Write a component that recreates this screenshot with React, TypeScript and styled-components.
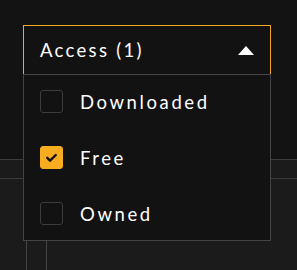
import { FC, useState } from "react";
import styled, { createGlobalStyle } from "styled-components";

const GlobalStyle = createGlobalStyle`
  html, body {
    margin: 0;
    padding: 0;
    background: #131313;
  }
  body {
    font-family: "Lato", "DejaVu Sans", sans-serif;
  }
`;

type Option = {
  id: string;
  label: string;
};

const options: Option[] = [
  { id: "downloaded", label: "Downloaded" },
  { id: "free", label: "Free" },
  { id: "owned", label: "Owned" },
];

const App: FC = () => {
  const [selected, setSelected] = useState<string[]>(["free"]);

  const toggle = (id: string) => {
    setSelected((prev) =>
      prev.includes(id) ? prev.filter((x) => x !== id) : [...prev, id]
    );
  };

  return (
    <Page>
      <GlobalStyle />
      {/* TABLE BEHIND */}
      <Table>
        <TopArea />
        <HeaderRow />
        <BodyRow>
          <Cell $width={26} />
          <Cell $width={19} />
          <Cell $width={0} $grow />
        </BodyRow>
      </Table>

      {/* DROPDOWN */}
      <Dropdown>
        <Trigger>
          <TriggerLabel>Access ({selected.length})</TriggerLabel>
          <Caret viewBox="0 0 16 9" width="16" height="9">
            <polygon points="8,0 16,9 0,9" fill="#ffffff" />
          </Caret>
        </Trigger>
        <Menu>
          {options.map((opt) => {
            const checked = selected.includes(opt.id);
            return (
              <Item key={opt.id} onClick={() => toggle(opt.id)}>
                <Box $checked={checked}>
                  {checked && (
                    <svg viewBox="0 0 24 24" width="17" height="17">
                      <path
                        d="M6 12.5l4 4L18 8.5"
                        fill="none"
                        stroke="#111"
                        strokeWidth="3.4"
                        strokeLinecap="round"
                        strokeLinejoin="round"
                      />
                    </svg>
                  )}
                </Box>
                <ItemLabel>{opt.label}</ItemLabel>
              </Item>
            );
          })}
        </Menu>
      </Dropdown>
    </Page>
  );
};

export default App;

const Page = styled.div`
  position: relative;
  width: 297px;
  height: 270px;
  overflow: hidden;
`;

const Table = styled.div`
  display: flex;
  flex-direction: column;
  height: 100%;
`;

const TopArea = styled.div`
  height: 159px;
  background: #131313;
  border-bottom: 1px solid #3b3b3b;
`;

const HeaderRow = styled.div`
  height: 18px;
  background: #1b1b1b;
  border-bottom: 1px solid #3b3b3b;
`;

const BodyRow = styled.div`
  flex: 1;
  display: flex;
  background: #1b1b1b;
`;

const Cell = styled.div<{ $width: number; $grow?: boolean }>`
  width: ${(p) => p.$width}px;
  flex: ${(p) => (p.$grow ? 1 : "none")};
  border-right: ${(p) => (p.$grow ? "none" : "1px solid #444")};
`;

const Dropdown = styled.div`
  position: absolute;
  top: 25px;
  left: 23px;
  width: 248px;
  display: flex;
  flex-direction: column;
`;

const Trigger = styled.div`
  height: 48px;
  display: flex;
  align-items: center;
  justify-content: space-between;
  padding: 0 16px 0 16px;
  background: #121212;
  border: 1px solid #f5a623;
  border-bottom: none;
  color: #fff;
`;

const TriggerLabel = styled.span`
  font-size: 18.5px;
  letter-spacing: 2.3px;
  color: #fff;
`;

const Caret = styled.svg`
  display: block;
`;

const Menu = styled.div`
  background: #121212;
  border: 1px solid #444;
  padding: 0 16px;
  height: 167px;
  box-sizing: border-box;
  display: flex;
  flex-direction: column;
  justify-content: center;
  gap: 33px;
`;

const Item = styled.div`
  display: flex;
  align-items: center;
  gap: 17px;
  cursor: pointer;
`;

const Box = styled.div<{ $checked: boolean }>`
  width: 23px;
  height: 23px;
  box-sizing: border-box;
  border-radius: 3px;
  border: 1px solid ${(p) => (p.$checked ? "#f7ad1f" : "#3c3c3c")};
  background: ${(p) => (p.$checked ? "#f7ad1f" : "transparent")};
  display: flex;
  align-items: center;
  justify-content: center;
`;

const ItemLabel = styled.span`
  font-size: 18.5px;
  letter-spacing: 2.6px;
  color: #fff;
`;
